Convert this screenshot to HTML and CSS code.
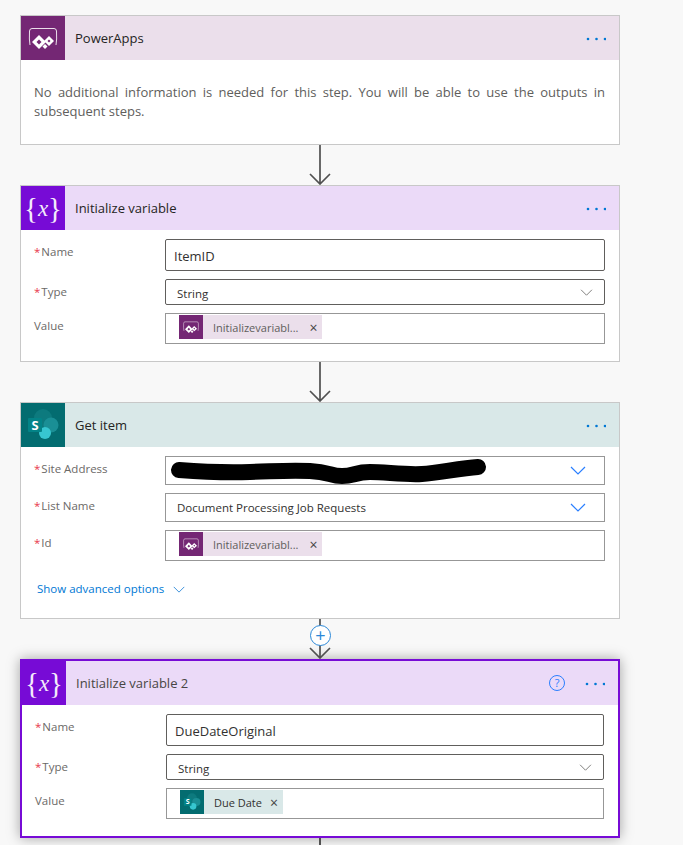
FILE: index.html
```html
<!DOCTYPE html>
<html lang="en">
<head>
  <meta charset="UTF-8" />
  <meta name="viewport" content="width=device-width, initial-scale=1.0" />
  <title>Flow steps</title>
  <link rel="stylesheet" href="styles.css">
</head>
<body>
  <svg class="defs" width="0" height="0">
    <symbol id="powerapps" viewBox="0 0 44 44">
      <path d="M9 29 Q8 24 8.500 15 Q8.700 12.500 11 12.500 H33 Q35.300 12.500 35.500 15 Q36 24 35 29" fill="none" stroke="#fff" stroke-opacity=".85" stroke-width="1"/>
      <path d="M18 19 L25 26 L18 33 L11 26 Z" fill="#fff"/>
      <path d="M18 23.500 L20.500 26 L18 28.500 L15.500 26 Z" fill="#742774"/>
      <path d="M28 20 L33 25 L28 30 L23 25 Z" fill="#fff"/>
      <path d="M28 23.500 L29.500 25 L28 26.500 L26.500 25 Z" fill="#742774"/>
      <path d="M24 28 L26.500 30.500 L24 33 L21.500 30.500 Z" fill="#fff"/>
    </symbol>
    <symbol id="sharepoint" viewBox="0 0 44 44">
      <circle cx="22" cy="15" r="9" fill="#0d7a7e"/>
      <circle cx="30" cy="22" r="7.500" fill="#1a8f95"/>
      <circle cx="24" cy="30" r="6" fill="#37c6d0"/>
      <rect x="7" y="15" width="14" height="14" rx="1" fill="#038387"/>
    </symbol>
    <symbol id="chevron" viewBox="0 0 16 9">
      <path d="M1 1 L8 8 L15 1" fill="none" stroke="currentColor" stroke-width="1.200"/>
    </symbol>
    <symbol id="dots" viewBox="0 0 20 4">
      <circle cx="2" cy="2" r="1.300"/><circle cx="10.500" cy="2" r="1.300"/><circle cx="19" cy="2" r="1.300"/>
    </symbol>
    <symbol id="arrow" viewBox="0 0 24 40">
      <path d="M12 0 V39 M2 29 L12 39 L22 29" fill="none" stroke="currentColor" stroke-width="1.700"/>
    </symbol>
  </svg>

  <div class="flow">
    <div class="card powerapps">
      <div class="card-head">
        <div class="card-icon"><svg class="icon-full"><use href="#powerapps"/></svg></div>
        <div class="card-title">PowerApps</div>
        <svg class="more"><use href="#dots"/></svg>
      </div>
      <p class="card-note">No additional information is needed for this step. You will be able to use the outputs in subsequent steps.</p>
    </div>

    <div class="connector"><svg class="arrow"><use href="#arrow"/></svg></div>

    <div class="card variable">
      <div class="card-head">
        <div class="card-icon"><span class="var-icon"><span>{</span><i>x</i><span>}</span></span></div>
        <div class="card-title">Initialize variable</div>
        <svg class="more"><use href="#dots"/></svg>
      </div>
      <div class="fields">
        <label class="req">Name</label>
        <div class="input tall strong text-big">ItemID</div>
        <label class="req">Type</label>
        <div class="input short strong select">String<svg class="chev grey"><use href="#chevron"/></svg></div>
        <label>Value</label>
        <div class="input token-row">
          <span class="token token-pa"><span class="token-icon"><svg class="icon-full"><use href="#powerapps"/></svg></span><span class="token-text">Initializevariabl...</span><span class="token-x">×</span></span>
        </div>
      </div>
    </div>

    <div class="connector"><svg class="arrow"><use href="#arrow"/></svg></div>

    <div class="card sharepoint">
      <div class="card-head">
        <div class="card-icon"><svg class="icon-full" viewBox="0 0 44 44"><use href="#sharepoint"/><text x="14" y="26.500" text-anchor="middle" class="sp-letter">S</text></svg></div>
        <div class="card-title">Get item</div>
        <svg class="more"><use href="#dots"/></svg>
      </div>
      <div class="fields">
        <label class="req">Site Address</label>
        <div class="input mid select">
          <svg class="scribble" viewBox="0 0 340 40"><path d="M19 19 C45 21 60 22 90 21 S130 19 150 20 S170 25 182 25 S195 21 210 21 S245 24 262 23 S300 17 318 16" fill="none" stroke="#000" stroke-width="16" stroke-linecap="round"/></svg>
          <svg class="chev blue"><use href="#chevron"/></svg>
        </div>
        <label class="req">List Name</label>
        <div class="input mid select">Document Processing Job Requests<svg class="chev blue"><use href="#chevron"/></svg></div>
        <label class="req">Id</label>
        <div class="input token-row">
          <span class="token token-pa"><span class="token-icon"><svg class="icon-full"><use href="#powerapps"/></svg></span><span class="token-text">Initializevariabl...</span><span class="token-x">×</span></span>
        </div>
      </div>
      <div class="advanced">Show advanced options<svg class="chev-adv"><use href="#chevron"/></svg></div>
    </div>

    <div class="connector">
      <svg class="arrow"><use href="#arrow"/></svg>
      <div class="add">+</div>
    </div>

    <div class="card variable selected">
      <div class="card-head">
        <div class="card-icon"><span class="var-icon"><span>{</span><i>x</i><span>}</span></span></div>
        <div class="card-title">Initialize variable 2</div>
        <div class="help">?</div>
        <svg class="more"><use href="#dots"/></svg>
      </div>
      <div class="fields">
        <label class="req">Name</label>
        <div class="input tall strong text-big">DueDateOriginal</div>
        <label class="req">Type</label>
        <div class="input short strong select">String<svg class="chev grey"><use href="#chevron"/></svg></div>
        <label>Value</label>
        <div class="input token-row">
          <span class="token token-sp"><span class="token-icon"><svg class="icon-full" viewBox="0 0 44 44"><use href="#sharepoint"/><text x="14" y="26.500" text-anchor="middle" class="sp-letter">S</text></svg></span><span class="token-text">Due Date</span><span class="token-x">×</span></span>
        </div>
      </div>
    </div>

    <div class="stub"></div>
  </div>
</body>
</html>
```

FILE: styles.css
```css
body, html {
  margin: 0;
  padding: 0;
  height: 100%;
  overflow: hidden;
  background: #f8f8f8;
  font-family: 'Open Sans', Arial, sans-serif;
}
.defs {
  position: absolute;
}
.flow {
  width: 600px;
  margin-left: 20px;
  padding-top: 15px;
}
.card {
  background: #fff;
  border: 1px solid #c8c8c8;
  box-sizing: border-box;
}
.card-head {
  display: flex;
  align-items: center;
  height: 44px;
}
.powerapps .card-head { background: #ebdfeb; }
.variable .card-head { background: #ebdaf8; }
.sharepoint .card-head { background: #d9e8e8; }
.card-icon {
  width: 44px;
  height: 44px;
  display: flex;
  align-items: center;
  justify-content: center;
}
.powerapps .card-icon { background: #742774; }
.variable .card-icon { background: #770bd6; }
.sharepoint .card-icon { background: #036c70; }
.icon-full {
  width: 100%;
  height: 100%;
  display: block;
}
.sp-letter {
  font-family: 'Open Sans', Arial, sans-serif;
  font-size: 13px;
  font-weight: 700;
  fill: #fff;
}
.var-icon {
  display: flex;
  align-items: center;
  color: #fff;
  font-family: 'Liberation Serif', serif;
  font-size: 29px;
  line-height: 1;
  opacity: 0.92;
}
.var-icon span {
  margin: 0 -1px;
}
.var-icon i {
  font-size: 23px;
  margin: 0 1px;
}
.card-title {
  margin-left: 10px;
  font-size: 13px;
  color: #252423;
}
.selected .card-title { color: #484644; }
.more {
  width: 20px;
  height: 4px;
  margin-left: auto;
  margin-right: 13px;
  margin-top: 2px;
  fill: #0078d4;
}
.card-note {
  margin: 0;
  padding: 23px 14px 23px 13px;
  height: 84px;
  box-sizing: border-box;
  font-size: 13px;
  line-height: 19px;
  color: #605e5c;
  text-align: justify;
}
.connector {
  position: relative;
  height: 40px;
  display: flex;
  justify-content: center;
  color: #505050;
}
.arrow {
  width: 24px;
  height: 40px;
  display: block;
}
.add {
  position: absolute;
  left: 290px;
  top: 6px;
  width: 19px;
  height: 19px;
  border: 1px solid #2b88d8;
  border-radius: 50%;
  background: #fff;
  color: #2b88d8;
  font-size: 18px;
  line-height: 18px;
  text-align: center;
}
.fields {
  display: grid;
  grid-template-columns: 131px 1fr;
  row-gap: 8px;
  padding: 9px 14px 17px 13px;
}
.fields label {
  padding-top: 5px;
  font-size: 11.500px;
  line-height: 16px;
  color: #6b6967;
}
.req::before {
  content: '*';
  color: #e8374c;
  margin-right: 1px;
}
.input {
  position: relative;
  display: flex;
  align-items: center;
  box-sizing: border-box;
  border: 1px solid #979797;
  padding: 0 11px;
  font-size: 11.500px;
  color: #323130;
  background: #fff;
}
.tall { height: 32px; padding: 1px 8px 0; }
.short { height: 26px; padding-top: 2px; }
.short .chev { margin-top: -1px; }
.mid { height: 29px; }
.strong {
  border-color: #605e5c;
  border-radius: 2px;
}
.text-big { font-size: 13px; }
.select .chev {
  margin-left: auto;
}
.chev {
  width: 16px;
  height: 9px;
}
.chev.grey {
  width: 13px;
  height: 7px;
  color: #797775;
}
.chev.blue {
  color: #2a7fff;
  margin-right: 7px;
}
.token-row {
  height: 31px;
  padding: 1px 13px 0;
  align-items: flex-start;
}
.token {
  display: flex;
  align-items: center;
  height: 24px;
  font-size: 11px;
  color: #605e5c;
}
.token-pa { background: #ebdfeb; }
.token-sp { background: #d9e8e8; color: #323130; }
.token-icon {
  width: 24px;
  height: 24px;
  display: block;
}
.token-pa .token-icon { background: #742774; }
.token-sp .token-icon { background: #036c70; }
.token-text {
  margin-left: 10px;
}
.token-x {
  margin: 0 5px 0 11px;
  font-size: 14px;
  color: #444;
}
.token-sp .token-x {
  margin-left: 8px;
}
.scribble {
  position: absolute;
  left: -6px;
  top: -6px;
  width: 340px;
  height: 40px;
}
.advanced {
  display: flex;
  align-items: center;
  padding: 1px 0 19px 16px;
  height: 20px;
  font-size: 11.500px;
  line-height: 20px;
  color: #0078d4;
}
.chev-adv {
  width: 12px;
  height: 7px;
  margin-left: 9px;
  color: #2b88d8;
}
.selected {
  border: 2px solid #770bd6;
  box-shadow: 0 0 12px rgba(0, 0, 0, 0.35);
}
.help {
  width: 14px;
  height: 14px;
  margin-left: auto;
  border: 1px solid #2a7fff;
  border-radius: 50%;
  color: #2a7fff;
  font-size: 11px;
  line-height: 14px;
  text-align: center;
}
.help + .more {
  margin-left: 20px;
}
.stub {
  width: 2px;
  height: 7px;
  margin-left: 299px;
  background: #505050;
}
```
